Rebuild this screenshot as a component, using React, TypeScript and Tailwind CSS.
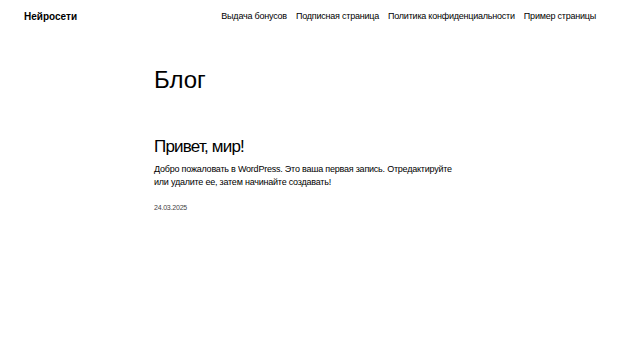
export default function App() {
  return (
    <div className="min-h-[343px] bg-white text-black font-['Liberation_Sans',Arial,sans-serif]">
      <header className="flex items-start justify-between px-6 pt-3">
        <div className="text-[10px] font-bold leading-none">Нейросети</div>
        <nav className="flex gap-[9px] text-[9px] leading-none tracking-[-0.22px]">
          <a>Выдача бонусов</a>
          <a>Подписная страница</a>
          <a>Политика конфиденциальности</a>
          <a>Пример страницы</a>
        </nav>
      </header>
      <main className="mx-auto w-[312px]">
        <h1 className="mt-[46px] text-[24px] leading-none">Блог</h1>
        <h2 className="mt-[46px] text-[17px] leading-none tracking-[-0.8px]">Привет, мир!</h2>
        <p className="mt-[8px] text-[9px] leading-[13px] tracking-[-0.22px]">
          Добро пожаловать в WordPress. Это ваша первая запись. Отредактируйте или удалите ее, затем начинайте создавать!
        </p>
        <div className="mt-[15px] text-[7px] leading-none tracking-[-0.2px] text-[#444]">24.03.2025</div>
      </main>
    </div>
  );
}
